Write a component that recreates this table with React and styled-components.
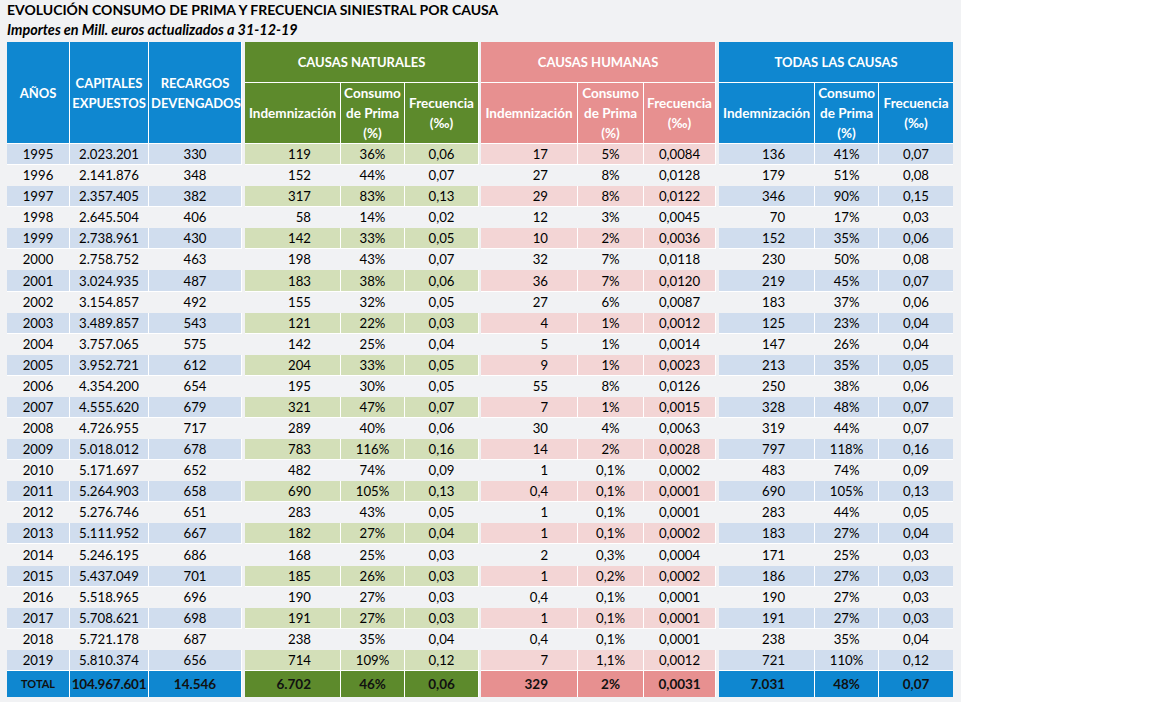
import React from 'react';
import styled, { createGlobalStyle } from 'styled-components';

const GlobalStyle = createGlobalStyle`
    html, body {
        margin: 0;
        padding: 0;
        background: #ffffff;
    }
    body {
        font-family: Lato, "Open Sans", sans-serif;
        color: #000;
    }
`;

const TONES = {
    blue: { strong: '#0f87d0', light: '#d0ddee' },
    green: { strong: '#5d8a2c', light: '#d3dfb8' },
    pink: { strong: '#e79090', light: '#f3d5d5' },
};

const PAGE_BG = '#f1f2f4';

const rows = [
    ['1995', '2.023.201', '330', '119', '36%', '0,06', '17', '5%', '0,0084', '136', '41%', '0,07'],
    ['1996', '2.141.876', '348', '152', '44%', '0,07', '27', '8%', '0,0128', '179', '51%', '0,08'],
    ['1997', '2.357.405', '382', '317', '83%', '0,13', '29', '8%', '0,0122', '346', '90%', '0,15'],
    ['1998', '2.645.504', '406', '58', '14%', '0,02', '12', '3%', '0,0045', '70', '17%', '0,03'],
    ['1999', '2.738.961', '430', '142', '33%', '0,05', '10', '2%', '0,0036', '152', '35%', '0,06'],
    ['2000', '2.758.752', '463', '198', '43%', '0,07', '32', '7%', '0,0118', '230', '50%', '0,08'],
    ['2001', '3.024.935', '487', '183', '38%', '0,06', '36', '7%', '0,0120', '219', '45%', '0,07'],
    ['2002', '3.154.857', '492', '155', '32%', '0,05', '27', '6%', '0,0087', '183', '37%', '0,06'],
    ['2003', '3.489.857', '543', '121', '22%', '0,03', '4', '1%', '0,0012', '125', '23%', '0,04'],
    ['2004', '3.757.065', '575', '142', '25%', '0,04', '5', '1%', '0,0014', '147', '26%', '0,04'],
    ['2005', '3.952.721', '612', '204', '33%', '0,05', '9', '1%', '0,0023', '213', '35%', '0,05'],
    ['2006', '4.354.200', '654', '195', '30%', '0,05', '55', '8%', '0,0126', '250', '38%', '0,06'],
    ['2007', '4.555.620', '679', '321', '47%', '0,07', '7', '1%', '0,0015', '328', '48%', '0,07'],
    ['2008', '4.726.955', '717', '289', '40%', '0,06', '30', '4%', '0,0063', '319', '44%', '0,07'],
    ['2009', '5.018.012', '678', '783', '116%', '0,16', '14', '2%', '0,0028', '797', '118%', '0,16'],
    ['2010', '5.171.697', '652', '482', '74%', '0,09', '1', '0,1%', '0,0002', '483', '74%', '0,09'],
    ['2011', '5.264.903', '658', '690', '105%', '0,13', '0,4', '0,1%', '0,0001', '690', '105%', '0,13'],
    ['2012', '5.276.746', '651', '283', '43%', '0,05', '1', '0,1%', '0,0001', '283', '44%', '0,05'],
    ['2013', '5.111.952', '667', '182', '27%', '0,04', '1', '0,1%', '0,0002', '183', '27%', '0,04'],
    ['2014', '5.246.195', '686', '168', '25%', '0,03', '2', '0,3%', '0,0004', '171', '25%', '0,03'],
    ['2015', '5.437.049', '701', '185', '26%', '0,03', '1', '0,2%', '0,0002', '186', '27%', '0,03'],
    ['2016', '5.518.965', '696', '190', '27%', '0,03', '0,4', '0,1%', '0,0001', '190', '27%', '0,03'],
    ['2017', '5.708.621', '698', '191', '27%', '0,03', '1', '0,1%', '0,0001', '191', '27%', '0,03'],
    ['2018', '5.721.178', '687', '238', '35%', '0,04', '0,4', '0,1%', '0,0001', '238', '35%', '0,04'],
    ['2019', '5.810.374', '656', '714', '109%', '0,12', '7', '1,1%', '0,0012', '721', '110%', '0,12'],
];

const totals = ['TOTAL', '104.967.601', '14.546', '6.702', '46%', '0,06', '329', '2%', '0,0031', '7.031', '48%', '0,07'];

// tono de cada columna de datos
const colTones = ['blue', 'blue', 'blue', 'green', 'green', 'green', 'pink', 'pink', 'pink', 'blue', 'blue', 'blue'];
// columnas que llevan hueco antes
const gapBefore = { 3: 3, 6: 2, 9: 3 };
// columnas de indemnización (alineadas a la derecha)
const rightCols = [3, 6, 9];

const groups = [
    { title: 'CAUSAS NATURALES', tone: 'green' },
    { title: 'CAUSAS HUMANAS', tone: 'pink' },
    { title: 'TODAS LAS CAUSAS', tone: 'blue' },
];

const colWidths = [63, 79, 93, 3, 96, 64, 74, 2, 97, 66, 72, 3, 96, 64, 74];

const Page = styled.div`
    width: 954px;
    height: 702px;
    background: ${PAGE_BG};
    padding: 0 0 0 7px;
    overflow: hidden;
`;

const Title = styled.h1`
    margin: 0;
    padding-top: 2px;
    height: 18px;
    font-size: 14px;
    font-weight: 700;
    line-height: 16px;
    white-space: nowrap;
`;

const Subtitle = styled.h2`
    margin: 0;
    height: 22px;
    font-size: 14.4px;
    font-weight: 700;
    font-style: italic;
    line-height: 20px;
    white-space: nowrap;
`;

const Table = styled.table`
    border-collapse: separate;
    border-spacing: 0;
    table-layout: fixed;
    width: 946px;
    font-size: 13.2px;
`;

const GroupRow = styled.tr`
    height: 41px;
`;

const SubRow = styled.tr`
    height: 61px;
`;

const DataRow = styled.tr`
    height: 21.08px;
`;

const TotalRow = styled.tr`
    height: 26px;
`;

const HeadCell = styled.th`
    box-sizing: border-box;
    padding: 0 2px;
    background: ${({ $tone }) => TONES[$tone].strong};
    color: #fff;
    font-weight: 700;
    font-size: ${({ $big }) => ($big ? '13px' : '13.5px')};
    line-height: 20px;
    text-align: center;
    vertical-align: middle;
    border-right: 1px solid #fff;
    border-bottom: 1px solid #fff;
    white-space: ${({ $nowrap }) => ($nowrap ? 'nowrap' : 'normal')};

    &:last-child {
        border-right: none;
    }
`;

const Gap = styled.td`
    padding: 0;
    background: ${PAGE_BG};
`;

const Cell = styled.td`
    box-sizing: border-box;
    padding: 0 ${({ $right }) => ($right ? '29px' : '2px')} 0 2px;
    background: ${({ $tone, $shade }) => ($shade ? TONES[$tone].light : 'transparent')};
    text-align: ${({ $right }) => ($right ? 'right' : 'center')};
    vertical-align: middle;
    line-height: 18px;
    white-space: nowrap;
    border-right: 1px solid ${({ $shade }) => ($shade ? '#fff' : 'transparent')};
    border-bottom: 1px solid ${({ $shade }) => ($shade ? '#fff' : 'transparent')};

    &:last-child {
        border-right: none;
    }
`;

const TotalCell = styled.td`
    box-sizing: border-box;
    padding: 0 ${({ $right }) => ($right ? '29px' : '1px')} 0 1px;
    background: ${({ $tone }) => TONES[$tone].strong};
    color: #111;
    font-weight: 700;
    font-size: ${({ $small }) => ($small ? '11px' : '13.5px')};
    letter-spacing: ${({ $tight }) => ($tight ? '-0.2px' : '0')};
    text-align: ${({ $right }) => ($right ? 'right' : 'center')};
    vertical-align: middle;
    white-space: nowrap;
    border-right: 1px solid #fff;

    &:last-child {
        border-right: none;
    }
`;

const renderCells = (values, renderOne) => {
    const out = [];
    values.forEach((v, i) => {
        if (gapBefore[i]) out.push(<Gap key={`g${i}`} />);
        out.push(renderOne(v, i));
    });
    return out;
};

const App = () => {
    return (
        <Page>
            <GlobalStyle />
            <Title>EVOLUCIÓN CONSUMO DE PRIMA Y FRECUENCIA SINIESTRAL POR CAUSA</Title>
            <Subtitle>Importes en Mill. euros actualizados a 31-12-19</Subtitle>
            <Table>
                <colgroup>
                    {colWidths.map((w, i) => (
                        <col key={i} style={{ width: w }} />
                    ))}
                </colgroup>
                <thead>
                    <GroupRow>
                        <HeadCell $tone="blue" $big rowSpan={2}>AÑOS</HeadCell>
                        <HeadCell $tone="blue" $big rowSpan={2}>CAPITALES EXPUESTOS</HeadCell>
                        <HeadCell $tone="blue" $big rowSpan={2}>RECARGOS DEVENGADOS</HeadCell>
                        {groups.map((g) => (
                            <React.Fragment key={g.title}>
                                <Gap rowSpan={2} />
                                <HeadCell $tone={g.tone} $big colSpan={3} $nowrap>{g.title}</HeadCell>
                            </React.Fragment>
                        ))}
                    </GroupRow>
                    <SubRow>
                        {groups.map((g) => (
                            <React.Fragment key={g.title}>
                                <HeadCell $tone={g.tone} $nowrap>Indemnización</HeadCell>
                                <HeadCell $tone={g.tone}>Consumo<br />de Prima<br />(%)</HeadCell>
                                <HeadCell $tone={g.tone}>Frecuencia<br />(‰)</HeadCell>
                            </React.Fragment>
                        ))}
                    </SubRow>
                </thead>
                <tbody>
                    {rows.map((row, r) => (
                        <DataRow key={row[0]}>
                            {renderCells(row, (v, i) => (
                                <Cell
                                    key={i}
                                    $tone={colTones[i]}
                                    $shade={r % 2 === 0}
                                    $right={rightCols.includes(i)}
                                >
                                    {v}
                                </Cell>
                            ))}
                        </DataRow>
                    ))}
                    <TotalRow>
                        {renderCells(totals, (v, i) => (
                            <TotalCell
                                key={i}
                                $tone={colTones[i]}
                                $right={rightCols.includes(i)}
                                $small={i === 0}
                                $tight={i === 1}
                            >
                                {v}
                            </TotalCell>
                        ))}
                    </TotalRow>
                </tbody>
            </Table>
        </Page>
    );
};

export default App;
